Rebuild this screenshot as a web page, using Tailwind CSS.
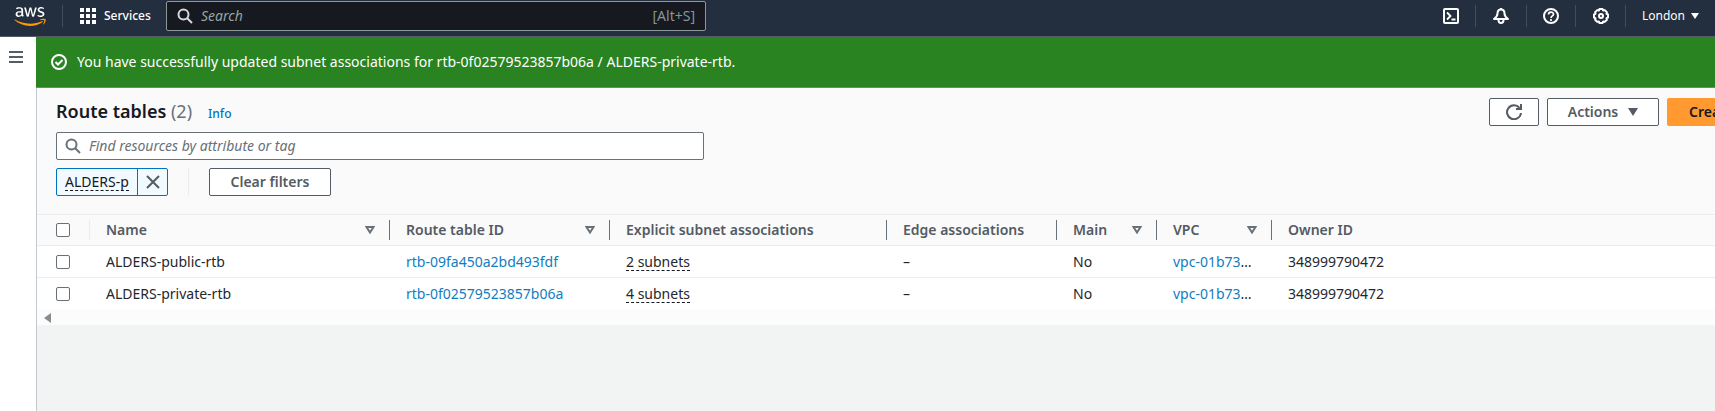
<!DOCTYPE html>
<html lang="en">
<head>
<meta charset="utf-8">
<title>Route tables</title>
<script src="https://cdn.jsdelivr.net/npm/@tailwindcss/browser@4"></script>
</head>
<body class="flex h-screen flex-col overflow-hidden bg-[#f2f3f3] font-['Noto_Sans',sans-serif] text-sm text-[#16191f]">
<header class="flex h-[37px] shrink-0 items-start border-b border-[#545b64] bg-[#232f3e] text-white">
  <a href="#" aria-label="AWS home" class="ml-3.5 mt-[7px] block w-8">
    <svg class="h-[19px] w-8" viewBox="0 0 304 182"><path fill="#fff" d="M86.4,66.4c0,3.700,0.400,6.700,1.100,8.900c0.800,2.200,1.800,4.600,3.200,7.200c0.500,0.800,0.700,1.600,0.700,2.300c0,1-0.600,2-1.900,3l-6.300,4.200c-0.900,0.600-1.800,0.900-2.600,0.900c-1,0-2-0.500-3-1.400C76.200,90,75,88.400,74,86.800c-1-1.700-2-3.600-3.100-5.900c-7.800,9.200-17.600,13.800-29.400,13.800c-8.400,0-15.100-2.400-20-7.200c-4.900-4.800-7.400-11.200-7.400-19.200c0-8.500,3-15.400,9.100-20.600c6.100-5.200,14.200-7.800,24.500-7.800c3.400,0,6.900,0.300,10.600,0.800c3.700,0.500,7.500,1.300,11.500,2.200v-7.300c0-7.600-1.600-12.900-4.700-16c-3.200-3.100-8.600-4.600-16.300-4.600c-3.500,0-7.100,0.400-10.800,1.300c-3.700,0.900-7.300,2-10.800,3.400c-1.600,0.700-2.800,1.100-3.500,1.300c-0.700,0.200-1.200,0.300-1.600,0.300c-1.400,0-2.100-1-2.100-3.100v-4.900c0-1.600,0.200-2.800,0.700-3.500c0.500-0.700,1.400-1.400,2.800-2.100c3.500-1.800,7.700-3.300,12.600-4.500c4.900-1.300,10.100-1.900,15.600-1.900c11.900,0,20.600,2.700,26.200,8.100c5.500,5.400,8.300,13.600,8.300,24.600V66.400z M45.800,81.600c3.300,0,6.700-0.600,10.300-1.800c3.600-1.200,6.800-3.400,9.500-6.400c1.600-1.900,2.800-4,3.400-6.400c0.600-2.400,1-5.300,1-8.700v-4.200c-2.900-0.700-6-1.300-9.200-1.700c-3.200-0.400-6.300-0.600-9.400-0.600c-6.700,0-11.600,1.300-14.900,4c-3.300,2.700-4.900,6.500-4.900,11.500c0,4.700,1.200,8.200,3.700,10.600C37.700,80.400,41.200,81.600,45.800,81.600z M126.100,92.400c-1.800,0-3-0.300-3.800-1c-0.800-0.600-1.500-2-2.100-3.900L96.700,10.200c-0.600-2-0.900-3.300-0.900-4c0-1.600,0.800-2.500,2.400-2.500h9.800c1.900,0,3.200,0.300,3.900,1c0.800,0.600,1.400,2,2,3.900l16.800,66.200l15.600-66.200c0.500-2,1.100-3.300,1.900-3.900c0.800-0.600,2.200-1,4-1h8c1.900,0,3.200,0.300,4,1c0.800,0.600,1.500,2,1.900,3.900l15.800,67l17.300-67c0.600-2,1.300-3.300,2-3.900c0.800-0.600,2.100-1,3.900-1h9.300c1.600,0,2.500,0.800,2.500,2.500c0,0.500-0.100,1-0.200,1.600c-0.100,0.600-0.300,1.400-0.700,2.500l-24.100,77.300c-0.600,2-1.300,3.300-2.100,3.900c-0.800,0.600-2.100,1-3.800,1h-8.600c-1.900,0-3.200-0.300-4-1c-0.800-0.700-1.500-2-1.900-4L156,23l-15.400,64.400c-0.500,2-1.100,3.300-1.900,4c-0.800,0.700-2.200,1-4,1H126.100z M254.600,95.100c-5.200,0-10.400-0.600-15.400-1.800c-5-1.200-8.900-2.500-11.500-4c-1.600-0.900-2.700-1.900-3.100-2.800c-0.400-0.900-0.600-1.900-0.600-2.800v-5.100c0-2.100,0.800-3.100,2.300-3.100c0.600,0,1.200,0.100,1.800,0.300c0.600,0.200,1.500,0.600,2.500,1c3.400,1.500,7.100,2.700,11,3.500c4,0.800,7.900,1.200,11.900,1.200c6.300,0,11.200-1.100,14.600-3.300c3.400-2.200,5.200-5.400,5.200-9.500c0-2.800-0.900-5.100-2.700-7c-1.800-1.900-5.200-3.600-10.100-5.200L246,52c-7.300-2.300-12.700-5.700-16-10.200c-3.300-4.400-5-9.300-5-14.500c0-4.200,0.900-7.900,2.700-11.100c1.800-3.200,4.200-6,7.200-8.200c3-2.300,6.400-4,10.400-5.200c4-1.200,8.200-1.700,12.600-1.700c2.200,0,4.500,0.100,6.700,0.400c2.300,0.300,4.400,0.700,6.500,1.100c2,0.500,3.900,1,5.700,1.600c1.800,0.600,3.200,1.200,4.200,1.800c1.400,0.800,2.400,1.600,3,2.500c0.600,0.800,0.900,1.900,0.900,3.300v4.700c0,2.100-0.800,3.200-2.300,3.200c-0.800,0-2.100-0.400-3.800-1.200c-5.700-2.600-12.100-3.900-19.200-3.900c-5.700,0-10.200,0.900-13.300,2.800c-3.100,1.900-4.700,4.800-4.700,8.900c0,2.800,1,5.200,3,7.100c2,1.900,5.700,3.800,11,5.500l14.200,4.500c7.200,2.300,12.400,5.500,15.500,9.600c3.100,4.100,4.600,8.800,4.600,14c0,4.300-0.900,8.200-2.600,11.600c-1.800,3.400-4.200,6.400-7.300,8.800c-3.100,2.500-6.800,4.300-11.100,5.600C264.400,94.400,259.700,95.100,254.600,95.100z"/><path fill="#f90" d="M273.500,143.700c-32.900,24.300-80.700,37.200-121.800,37.200c-57.600,0-109.500-21.300-148.700-56.700c-3.100-2.800-0.300-6.600,3.400-4.400c42.400,24.600,94.700,39.500,148.800,39.500c36.500,0,76.600-7.600,113.500-23.200C274.200,133.600,278.900,139.700,273.500,143.700z M287.200,128.100c-4.200-5.400-27.800-2.600-38.500-1.300c-3.200,0.400-3.700-2.400-0.800-4.500c18.800-13.200,49.700-9.400,53.300-5c3.600,4.500-1,35.400-18.600,50.200c-2.700,2.300-5.300,1.100-4.100-1.900C282.500,155.700,291.400,133.400,287.200,128.100z"/></svg>
  </a>
  <span class="ml-4 mt-[5px] h-[22px] w-px bg-[#414d5c]"></span>
  <button type="button" class="ml-[17px] flex h-8 w-[70px] items-center gap-2 text-xs font-medium">
    <svg class="size-4 shrink-0" viewBox="0 0 16 16" fill="#fff"><path d="M0 0h4v4H0zM6 0h4v4H6zM12 0h4v4h-4zM0 6h4v4H0zM6 6h4v4H6zM12 6h4v4h-4zM0 12h4v4H0zM6 12h4v4H6zM12 12h4v4h-4z"/></svg>
    Services
  </button>
  <label class="ml-4 mt-px flex h-[30px] w-[540px] items-center rounded-xs border border-[#8d9999] bg-[#16191f] px-2.5">
    <svg class="size-4 shrink-0" viewBox="0 0 16 16" fill="none" stroke="#d5dbdb" stroke-width="2"><circle cx="6.500" cy="6.500" r="5"/><path d="M10 10l5 5"/></svg>
    <input type="text" aria-label="Search" placeholder="Search" class="ml-2 min-w-0 flex-1 bg-transparent text-sm italic outline-none placeholder:text-[#95a5a6]">
    <span class="text-sm text-[#879596]">[Alt+S]</span>
  </label>
  <div class="ml-auto flex h-8 items-center">
    <button type="button" aria-label="CloudShell" class="flex w-[49px] justify-center"><svg class="size-4" viewBox="0 0 16 16" fill="none" stroke="#fff" stroke-width="2"><rect x="1" y="1" width="14" height="14" rx="1"/><path d="M4 4.500L7.500 8 4 11.500M8.500 11.500h4" stroke-width="1.800"/></svg></button>
    <span class="h-[22px] w-px bg-[#414d5c]"></span>
    <button type="button" aria-label="Notifications" class="flex w-[50px] justify-center"><svg class="size-4" viewBox="0 0 16 16" fill="none" stroke="#fff" stroke-width="2" stroke-linejoin="round"><path d="M8 1.500C5.500 1.500 4.500 3.500 4.500 5.500 4.500 8 3 9.500 1 11h14C13 9.500 11.500 8 11.500 5.500 11.500 3.500 10.500 1.500 8 1.500z"/><path d="M8 0v2M5.500 11.500v.8c0 3.600 5 3.600 5 0v-.8"/></svg></button>
    <span class="h-[22px] w-px bg-[#414d5c]"></span>
    <button type="button" aria-label="Help" class="flex w-12 justify-center"><svg class="size-4" viewBox="0 0 16 16" fill="none" stroke="#fff" stroke-width="2"><circle cx="8" cy="8" r="7"/><path d="M5.500 6.500C5.500 3.300 10.500 3.300 10.500 6.300 10.500 8 8 7.800 8 10M8 11v2" stroke-width="1.700"/></svg></button>
    <span class="h-[22px] w-px bg-[#414d5c]"></span>
    <button type="button" aria-label="Settings" class="flex w-[49px] justify-center"><svg class="size-4" viewBox="0 0 16 16" fill="none" stroke="#fff" stroke-width="2"><path stroke-linejoin="round" d="M6.500 1h3l.7 1.500 1.600-.4 2.100 2.100-.4 1.600L15 6.500v3l-1.500.7.4 1.600-2.100 2.100-1.600-.4L9.500 15h-3l-.7-1.500-1.600.4-2.100-2.100.4-1.600L1 9.500v-3l1.500-.7-.4-1.600 2.100-2.100 1.600.4z"/><circle cx="8" cy="8" r="2"/></svg></button>
    <span class="h-[22px] w-px bg-[#414d5c]"></span>
    <button type="button" class="flex w-[89px] items-center gap-1.5 pl-4 text-xs">London <svg class="h-1.5 w-2" viewBox="0 0 8 6" fill="#fff"><path d="M0 0h8L4 6z"/></svg></button>
  </div>
</header>
<div class="flex min-h-0 flex-1">
  <nav class="w-9 shrink-0 bg-white">
    <button type="button" aria-label="Open navigation" class="ml-[9px] mt-3.5 block"><svg class="h-3 w-3.5" viewBox="0 0 14 12" fill="#545b64"><path d="M0 0h14v2H0zM0 5h14v2H0zM0 10h14v2H0z"/></svg></button>
  </nav>
  <main class="min-w-0 flex-1 overflow-hidden">
    <div role="status" class="flex h-[51px] items-center gap-2.5 border-b border-[#59995a] bg-[#298320] pl-[15px] text-white">
      <svg class="size-4" viewBox="0 0 16 16" fill="none" stroke="#fff" stroke-width="2"><circle cx="8" cy="8" r="7"/><path d="M4.500 8l2.500 2.500L11.500 6"/></svg>
      You have successfully updated subnet associations for rtb-0f02579523857b06a / ALDERS-private-rtb.
    </div>
    <div class="h-full border-l border-[#c4cbd0]">
      <section class="bg-[#fafafa]">
        <div class="flex items-start pl-[19px] pt-2.5">
          <h1 class="text-lg font-semibold leading-[26px]">Route tables <span class="font-normal text-[#687078]">(2)</span></h1>
          <a href="#" class="ml-4 mt-1 text-xs font-medium leading-6 text-[#0073bb]">Info</a>
          <div class="-mr-[122px] ml-auto flex gap-2 text-sm font-semibold text-[#545b64]">
            <button type="button" aria-label="Refresh" class="flex h-7 w-[50px] items-center justify-center rounded-xs border border-[#545b64] bg-white"><svg class="size-4" viewBox="0 0 16 16" fill="none" stroke="#545b64" stroke-width="2"><path d="M15 9a7 7 0 1 1-1.500-5.200M10 5h5V0"/></svg></button>
            <button type="button" class="flex h-7 w-28 items-center justify-center gap-2.5 rounded-xs border border-[#545b64] bg-white">Actions <svg class="h-2 w-2.5" viewBox="0 0 10 8" fill="#545b64"><path d="M0 0h10L5 8z"/></svg></button>
            <button type="button" class="h-7 w-[170px] whitespace-nowrap rounded-xs bg-[#ff9930] pl-[22px] text-left text-[#16191f]">Create route table</button>
          </div>
        </div>
        <label class="ml-[19px] mt-1.5 flex h-7 w-[648px] items-center rounded-xs border border-[#687078] bg-white px-2">
          <svg class="size-4" viewBox="0 0 16 16" fill="none" stroke="#687078" stroke-width="2"><circle cx="6.500" cy="6.500" r="5"/><path d="M10 10l5 5"/></svg>
          <input type="text" aria-label="Find resources" placeholder="Find resources by attribute or tag" class="ml-2 min-w-0 flex-1 text-sm italic outline-none placeholder:text-[#687078]">
        </label>
        <div class="flex h-[54px] items-start pl-[19px] pt-2">
          <div class="flex h-7 w-28 items-center rounded-xs border border-[#0073bb] bg-[#f1faff]">
            <button type="button" class="ml-2 whitespace-nowrap border-b border-dashed border-[#16191f] leading-4">ALDERS-p</button>
            <button type="button" aria-label="Remove filter" class="ml-auto flex h-full w-[30px] shrink-0 items-center justify-center border-l border-[#0073bb]"><svg class="size-3.5" viewBox="0 0 14 14" stroke="#545b64" stroke-width="2"><path d="M1 1l12 12M13 1L1 13"/></svg></button>
          </div>
          <span class="ml-5 h-7 w-px bg-[#eaeded]"></span>
          <button type="button" class="ml-5 h-7 w-[122px] rounded-xs border border-[#545b64] bg-white font-semibold text-[#545b64]">Clear filters</button>
        </div>
        <table class="w-full table-fixed border-separate border-spacing-0 text-left">
          <colgroup><col class="w-[53px]"><col class="w-[300px]"><col class="w-[220px]"><col class="w-[277px]"><col class="w-[170px]"><col class="w-[100px]"><col class="w-[115px]"><col></colgroup>
          <thead class="text-[#545b64]">
            <tr class="h-8 *:border-y *:border-[#eaeded] *:p-0 *:font-semibold">
              <th><div class="flex h-5 items-center border-r border-[#eaeded] pl-[19px]"><input type="checkbox" aria-label="Select all" class="size-3.5 appearance-none rounded-xs border border-[#687078] bg-white"></div></th>
              <th><div class="flex h-5 items-center justify-between border-r border-[#687078] pl-4 pr-3.5">Name<svg class="h-2 w-2.5" viewBox="0 0 10 8" fill="none" stroke="#687078" stroke-width="2"><path d="M1.500 1h7L5 6.500z"/></svg></div></th>
              <th><div class="flex h-5 items-center justify-between border-r border-[#687078] pl-4 pr-3.5">Route table ID<svg class="h-2 w-2.5" viewBox="0 0 10 8" fill="none" stroke="#687078" stroke-width="2"><path d="M1.500 1h7L5 6.500z"/></svg></div></th>
              <th><div class="flex h-5 items-center border-r border-[#687078] pl-4">Explicit subnet associations</div></th>
              <th><div class="flex h-5 items-center border-r border-[#687078] pl-4">Edge associations</div></th>
              <th><div class="flex h-5 items-center justify-between border-r border-[#687078] pl-4 pr-3.5">Main<svg class="h-2 w-2.5" viewBox="0 0 10 8" fill="none" stroke="#687078" stroke-width="2"><path d="M1.500 1h7L5 6.500z"/></svg></div></th>
              <th><div class="flex h-5 items-center justify-between border-r border-[#687078] pl-4 pr-3.5">VPC<svg class="h-2 w-2.5" viewBox="0 0 10 8" fill="none" stroke="#687078" stroke-width="2"><path d="M1.500 1h7L5 6.500z"/></svg></div></th>
              <th><div class="flex h-5 items-center pl-4">Owner ID</div></th>
            </tr>
          </thead>
          <tbody class="bg-white text-[#24272c]">
            <tr class="h-8 *:border-b *:border-[#eaeded] *:py-0 *:pl-4 *:pr-0">
              <td><input type="checkbox" aria-label="Select ALDERS-public-rtb" class="ml-[3px] block size-3.5 appearance-none rounded-xs border border-[#687078] bg-white"></td>
              <td>ALDERS-public-rtb</td>
              <td><a href="#" class="text-[#117dc0]">rtb-09fa450a2bd493fdf</a></td>
              <td><button type="button" class="border-b border-dashed border-[#16191f] leading-4">2 subnets</button></td>
              <td>–</td><td>No</td>
              <td><a href="#" class="text-[#117dc0]">vpc-01b73</a>…</td>
              <td>348999790472</td>
            </tr>
            <tr class="h-8 *:py-0 *:pl-4 *:pr-0">
              <td><input type="checkbox" aria-label="Select ALDERS-private-rtb" class="ml-[3px] block size-3.5 appearance-none rounded-xs border border-[#687078] bg-white"></td>
              <td>ALDERS-private-rtb</td>
              <td><a href="#" class="text-[#117dc0]">rtb-0f02579523857b06a</a></td>
              <td><button type="button" class="border-b border-dashed border-[#16191f] leading-4">4 subnets</button></td>
              <td>–</td><td>No</td>
              <td><a href="#" class="text-[#117dc0]">vpc-01b73</a>…</td>
              <td>348999790472</td>
            </tr>
          </tbody>
        </table>
        <div class="flex h-[15px] items-center bg-[#fcfcfc] pl-[7px]"><svg class="h-2.5 w-[7px]" viewBox="0 0 7 10" fill="#8b8b8b"><path d="M7 0v10L0 5z"/></svg></div>
      </section>
    </div>
  </main>
</div>
</body>
</html>
